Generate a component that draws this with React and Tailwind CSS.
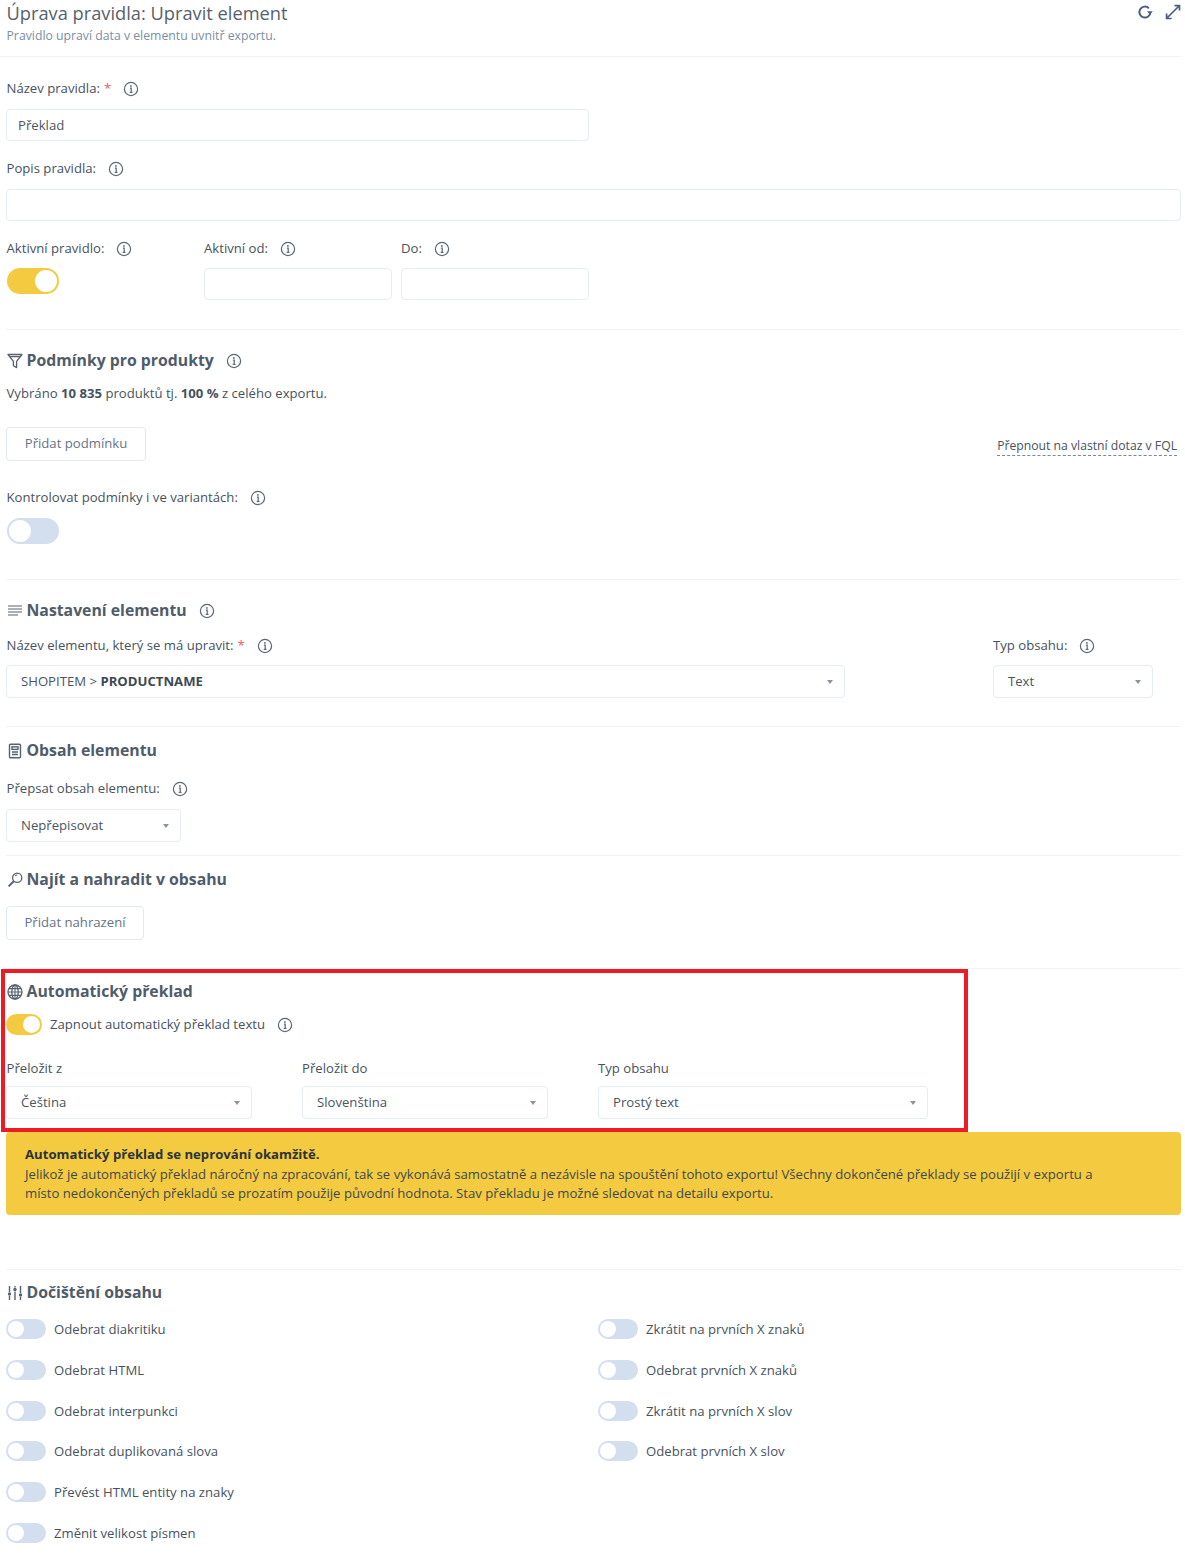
const inputCls = 'h-8 rounded border border-[#e4ecf5] bg-white px-[11px] text-[13.15px] leading-[30px] text-[#4a5560]';

function Info({ className = '' }) {
  return (
    <svg viewBox="0 0 16 16" className={`h-4 w-4 shrink-0 text-[#5c6873] ${className}`} fill="none" stroke="currentColor">
      <circle cx="8" cy="8" r="6.6" strokeWidth="1.2" />
      <path d="M6.9 7.1H8.2V11.4M6.7 11.4H9.5" strokeWidth="1.2" />
      <circle cx="7.9" cy="4.9" r="0.9" fill="currentColor" stroke="none" />
    </svg>
  );
}

function Label({ children, required, gap = 'ml-3', inset = 'pl-[0.5px]', className = '' }) {
  return (
    <div className={`flex h-5 items-center ${inset} text-[13.15px] text-[#47525d] ${className}`}>
      <span>{children}</span>
      {required ? <span className="ml-1 text-[#ee5a6f]">*</span> : null}
      <Info className={gap} />
    </div>
  );
}

function Toggle({ on, w = 'w-[52px]', h = 'h-[26px]', knob = 'w-[22px]' }) {
  return (
    <div className={`flex ${w} ${h} shrink-0 rounded-full p-0.5 ${on ? 'justify-end bg-[#f4cb40]' : 'justify-start bg-[#d3dfee]'}`}>
      <div className={`${knob} rounded-full bg-white`} />
    </div>
  );
}

function Select({ value, className = '', children }) {
  return (
    <div className={`flex h-[33px] items-center justify-between rounded border border-[#e4ecf5] bg-white pl-[14px] pr-[11px] text-[13.15px] text-[#4a5560] ${className}`}>
      <span>{children || value}</span>
      <span className="h-0 w-0 border-x-[3px] border-t-4 border-x-transparent border-t-[#8a949e]" />
    </div>
  );
}

function Heading({ icon, info, children, className = '' }) {
  return (
    <div className={`flex h-6 items-center pt-[2px] pl-[0.5px] text-[15.8px] font-bold text-[#4f5c69] ${className}`}>
      {icon}
      <span className="ml-1">{children}</span>
      {info ? <Info className="ml-3" /> : null}
    </div>
  );
}

function Button({ children, className = '' }) {
  return (
    <div className={`flex h-[34px] items-center justify-center rounded border border-[#dfe8f3] bg-white text-[13.15px] text-[#66738a] ${className}`}>
      {children}
    </div>
  );
}

function Divider({ className = '' }) {
  return <div className={`h-px bg-[#f0f3f7] ${className}`} />;
}

function CleanRow({ children }) {
  return (
    <div className="flex h-[40.8px] items-start">
      <Toggle w="w-10" h="h-5" knob="w-4" />
      <span className="ml-2 text-[13.15px] leading-5 text-[#47525d]">{children}</span>
    </div>
  );
}

const iconCls = 'h-4 w-4 shrink-0 text-[#56636f]';

function FunnelIcon() {
  return (
    <svg viewBox="0 0 16 16" className={iconCls} fill="none" stroke="currentColor" strokeWidth="1.3" strokeLinejoin="round">
      <path d="M1 1.5H15L9.6 8.4V14.6L6.4 12.8V8.4Z" />
      <path d="M2.6 3.6H13.4" />
    </svg>
  );
}

function LinesIcon() {
  return (
    <svg viewBox="0 0 16 16" className={iconCls} fill="none" stroke="currentColor" strokeWidth="1.1">
      <path d="M1 3H15M1 6H15M1 9H15M1 12H11" />
    </svg>
  );
}

function PageIcon() {
  return (
    <svg viewBox="0 0 16 16" className={iconCls} fill="none" stroke="currentColor" strokeWidth="1.4">
      <rect x="2.5" y="1.2" width="11" height="13.6" rx="1" />
      <rect x="5" y="3.8" width="6" height="2.6" />
      <path d="M5 9h6M5 11.5h6" />
    </svg>
  );
}

function LensIcon() {
  return (
    <svg viewBox="0 0 16 16" className={iconCls} fill="none" stroke="currentColor">
      <circle cx="10.2" cy="5.8" r="4.6" strokeWidth="1.3" />
      <path d="M6.8 9.2L1.6 14.4" strokeWidth="2" />
      <path d="M8 3.8A3 3 0 0 1 10.4 3" strokeWidth="1" />
    </svg>
  );
}

function GlobeIcon() {
  return (
    <svg viewBox="0 0 16 16" className={iconCls} fill="none" stroke="currentColor" strokeWidth="1.3">
      <circle cx="8" cy="8" r="7" />
      <ellipse cx="8" cy="8" rx="3.2" ry="7" />
      <path d="M8 1V15M1 8H15M2 4.6H14M2 11.4H14" strokeWidth="1.1" />
    </svg>
  );
}

function SlidersIcon() {
  return (
    <svg viewBox="0 0 16 16" className={iconCls} fill="currentColor" stroke="currentColor">
      <path d="M2.5 1V7M2.5 11V15M8 1V2.5M8 6.5V15M13.5 1V8M13.5 12V15" strokeWidth="1.4" fill="none" />
      <circle cx="2.5" cy="9" r="1.7" strokeWidth="0" />
      <circle cx="8" cy="4.5" r="1.7" strokeWidth="0" />
      <circle cx="13.5" cy="10" r="1.7" strokeWidth="0" />
    </svg>
  );
}

export default function App() {
  return (
    <div className="relative min-h-[1554px] bg-white pr-1 font-['Open_Sans',sans-serif]">
      <div className="flex h-[56px] items-start justify-between pl-[6.5px]">
        <div>
          <h1 className="text-[18.25px] leading-[26px] font-normal text-[#56616c]">Úprava pravidla: Upravit element</h1>
          <p className="mt-px text-[12.25px] leading-[18px] text-[#7b8ea3]">Pravidlo upraví data v elementu uvnitř exportu.</p>
        </div>
        <div className="-mr-px mt-[3px] flex items-center gap-[11px] text-[#4d5f80]">
          <svg viewBox="0 0 16 16" className="h-4 w-4" fill="none" stroke="currentColor" strokeWidth="2">
            <path d="M13.4 8.2A5.5 5.5 0 1 1 11.8 4.2" />
            <path d="M10 7.2h5.8L12.9 10.8z" fill="currentColor" stroke="none" />
          </svg>
          <svg viewBox="0 0 18 18" className="h-[18px] w-[18px]" fill="none" stroke="currentColor" strokeWidth="1.7">
            <path d="M3 15L15 3M10.5 2.6h5v5M2.6 10.5v5h5" />
          </svg>
        </div>
      </div>
      <Divider />

      <div className="pl-[6px]">
        <Label required className="mt-[22px]">Název pravidla:</Label>
        <div className={`${inputCls} mt-[10px] w-[583px]`}>Překlad</div>
        <Label className="mt-[18px]">Popis pravidla:</Label>
        <div className={`${inputCls} mt-[10px] w-full`} />

        <div className="mt-[18px] flex">
          <div className="w-[198px]">
            <Label>Aktivní pravidlo:</Label>
            <div className="mt-[9px] pl-px"><Toggle on /></div>
          </div>
          <div className="w-[188px]">
            <Label inset="pl-0">Aktivní od:</Label>
            <div className={`${inputCls} mt-[9px] w-full`} />
          </div>
          <div className="ml-[9px] w-[188px]">
            <Label inset="pl-0">Do:</Label>
            <div className={`${inputCls} mt-[9px] w-full`} />
          </div>
        </div>

        <Divider className="mt-[29px]" />
        <Heading info className="mt-[18px]" icon={<FunnelIcon />}>
          Podmínky pro produkty
        </Heading>
        <p className="mt-[12px] pl-[0.5px] text-[13.15px] leading-[18px] text-[#47525d]">
          Vybráno <b>10 835</b> produktů tj. <b>100 %</b> z celého exportu.
        </p>
        <div className="mt-[25px] flex items-end justify-between pr-1">
          <Button className="w-[140px]">Přidat podmínku</Button>
          <span className="mb-[5px] border-b border-dashed border-[#7b8794] text-[12.2px] leading-[18px] text-[#47525d]">
            Přepnout na vlastní dotaz v FQL
          </span>
        </div>
        <Label className="mt-[27px]">Kontrolovat podmínky i ve variantách:</Label>
        <div className="mt-[10px] pl-px"><Toggle /></div>

        <Divider className="mt-[35px]" />
        <Heading info className="mt-[18px]" icon={<LinesIcon />}>
          Nastavení elementu
        </Heading>
        <div className="mt-[14px] flex">
          <div className="w-[839px]">
            <Label required>Název elementu, který se má upravit:</Label>
            <Select className="mt-[9px]">SHOPITEM &gt; <b className="text-[#3e4852]">PRODUCTNAME</b></Select>
          </div>
          <div className="ml-[148px] w-[160px]">
            <Label inset="pl-0">Typ obsahu:</Label>
            <Select value="Text" className="mt-[9px]" />
          </div>
        </div>

        <Divider className="mt-[28px]" />
        <Heading className="mt-[11px]" icon={<PageIcon />}>Obsah elementu</Heading>
        <Label className="mt-[17px]">Přepsat obsah elementu:</Label>
        <Select value="Nepřepisovat" className="mt-[10px] w-[175px]" />

        <Divider className="mt-[13px]" />
        <Heading className="mt-[11px]" icon={<LensIcon />}>
          Najít a nahradit v obsahu
        </Heading>
        <Button className="mt-[15px] w-[138px]">Přidat nahrazení</Button>

        <Divider className="mt-[28px]" />
        <Heading className="mt-[10px]" icon={<GlobeIcon />}>
          Automatický překlad
        </Heading>
        <div className="mt-[11px] flex h-[21px] items-center">
          <Toggle on w="w-9" h="h-[21px]" knob="w-[17px]" />
          <span className="ml-2 text-[13.15px] text-[#47525d]">Zapnout automatický překlad textu</span>
          <Info className="ml-3" />
        </div>
        <div className="mt-[23px] flex">
          <div className="w-[246px]">
            <div className="h-5 pl-[0.5px] text-[13.15px] leading-5 text-[#47525d]">Přeložit z</div>
            <Select value="Čeština" className="mt-2" />
          </div>
          <div className="ml-[50px] w-[246px]">
            <div className="h-5 text-[13.15px] leading-5 text-[#47525d]">Přeložit do</div>
            <Select value="Slovenština" className="mt-2" />
          </div>
          <div className="ml-[50px] w-[330px]">
            <div className="h-5 text-[13.15px] leading-5 text-[#47525d]">Typ obsahu</div>
            <Select value="Prostý text" className="mt-2" />
          </div>
        </div>

        <div className="mt-[13px] h-[83px] rounded bg-[#f4cb40] px-[19px] pt-[13px] text-[13.15px] leading-[19.5px] text-[#3e4750]">
          <p className="font-bold text-[#2b333b]">Automatický překlad se neprování okamžitě.</p>
          <p>
            Jelikož je automatický překlad náročný na zpracování, tak se vykonává samostatně a nezávisle na spouštění tohoto exportu! Všechny dokončené překlady se použijí v exportu a
            <br />
            místo nedokončených překladů se prozatím použije původní hodnota. Stav překladu je možné sledovat na detailu exportu.
          </p>
        </div>

        <Divider className="mt-[54px]" />
        <Heading className="mt-[10px]" icon={<SlidersIcon />}>
          Dočištění obsahu
        </Heading>
        <div className="mt-[15px] grid grid-cols-[592px_1fr]">
          <div>
            <CleanRow>Odebrat diakritiku</CleanRow>
            <CleanRow>Odebrat HTML</CleanRow>
            <CleanRow>Odebrat interpunkci</CleanRow>
            <CleanRow>Odebrat duplikovaná slova</CleanRow>
            <CleanRow>Převést HTML entity na znaky</CleanRow>
            <CleanRow>Změnit velikost písmen</CleanRow>
          </div>
          <div>
            <CleanRow>Zkrátit na prvních X znaků</CleanRow>
            <CleanRow>Odebrat prvních X znaků</CleanRow>
            <CleanRow>Zkrátit na prvních X slov</CleanRow>
            <CleanRow>Odebrat prvních X slov</CleanRow>
          </div>
        </div>
      </div>

      {/* red annotation frame over the translation section */}
      <div className="pointer-events-none absolute top-[969px] left-[1px] h-[163px] w-[967px] border-4 border-[#ed1c24]" />
    </div>
  );
}
